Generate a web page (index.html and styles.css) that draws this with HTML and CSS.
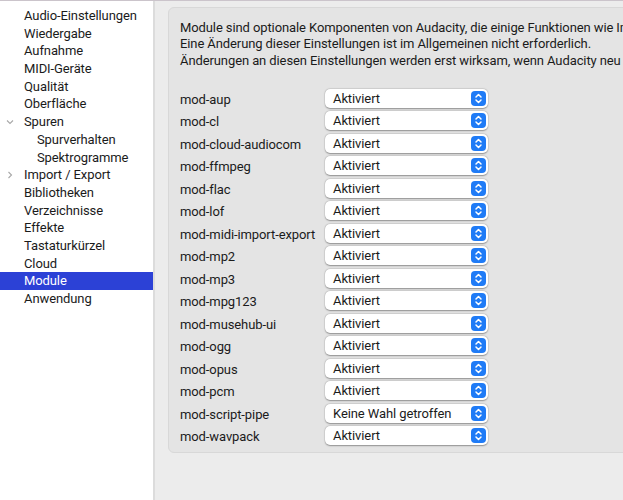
FILE: index.html
```html
<!DOCTYPE html>
<html lang="de">
<head>
  <meta charset="UTF-8">
  <meta name="viewport" content="width=device-width, initial-scale=1.0">
  <title>Einstellungen: Module</title>
  <link rel="stylesheet" href="styles.css">
</head>
<body>
  <aside class="sidebar">
    <ul class="nav">
      <li>Audio-Einstellungen</li>
      <li>Wiedergabe</li>
      <li>Aufnahme</li>
      <li>MIDI-Geräte</li>
      <li>Qualität</li>
      <li>Oberfläche</li>
      <li class="group open">
        <svg class="twisty" width="8" height="8" viewBox="0 0 8 8"><polyline points="1,2.5 4,5.5 7,2.5"/></svg>
        Spuren
      </li>
      <li class="sub">Spurverhalten</li>
      <li class="sub">Spektrogramme</li>
      <li class="group">
        <svg class="twisty" width="8" height="8" viewBox="0 0 8 8"><polyline points="2.5,1 5.5,4 2.5,7"/></svg>
        Import / Export
      </li>
      <li>Bibliotheken</li>
      <li>Verzeichnisse</li>
      <li>Effekte</li>
      <li>Tastaturkürzel</li>
      <li>Cloud</li>
      <li class="selected">Module</li>
      <li>Anwendung</li>
    </ul>
  </aside>

  <main class="content">
    <section class="group-box">
      <p class="intro">Module sind optionale Komponenten von Audacity, die einige Funktionen wie Import/Export ermöglichen.<br>Eine Änderung dieser Einstellungen ist im Allgemeinen nicht erforderlich.</p>
      <p class="intro">Änderungen an diesen Einstellungen werden erst wirksam, wenn Audacity neu gestartet wird.</p>

      <div class="module-list">
        <label>mod-aup</label>
        <div class="popup"><span>Aktiviert</span><svg class="stepper" width="15" height="15" viewBox="0 0 15 15"><rect width="15" height="15" rx="4"/><polyline points="5,6 7.5,3.5 10,6"/><polyline points="5,9 7.5,11.5 10,9"/></svg></div>
        <label>mod-cl</label>
        <div class="popup"><span>Aktiviert</span><svg class="stepper" width="15" height="15" viewBox="0 0 15 15"><rect width="15" height="15" rx="4"/><polyline points="5,6 7.5,3.5 10,6"/><polyline points="5,9 7.5,11.5 10,9"/></svg></div>
        <label>mod-cloud-audiocom</label>
        <div class="popup"><span>Aktiviert</span><svg class="stepper" width="15" height="15" viewBox="0 0 15 15"><rect width="15" height="15" rx="4"/><polyline points="5,6 7.5,3.5 10,6"/><polyline points="5,9 7.5,11.5 10,9"/></svg></div>
        <label>mod-ffmpeg</label>
        <div class="popup"><span>Aktiviert</span><svg class="stepper" width="15" height="15" viewBox="0 0 15 15"><rect width="15" height="15" rx="4"/><polyline points="5,6 7.5,3.5 10,6"/><polyline points="5,9 7.5,11.5 10,9"/></svg></div>
        <label>mod-flac</label>
        <div class="popup"><span>Aktiviert</span><svg class="stepper" width="15" height="15" viewBox="0 0 15 15"><rect width="15" height="15" rx="4"/><polyline points="5,6 7.5,3.5 10,6"/><polyline points="5,9 7.5,11.5 10,9"/></svg></div>
        <label>mod-lof</label>
        <div class="popup"><span>Aktiviert</span><svg class="stepper" width="15" height="15" viewBox="0 0 15 15"><rect width="15" height="15" rx="4"/><polyline points="5,6 7.5,3.5 10,6"/><polyline points="5,9 7.5,11.5 10,9"/></svg></div>
        <label>mod-midi-import-export</label>
        <div class="popup"><span>Aktiviert</span><svg class="stepper" width="15" height="15" viewBox="0 0 15 15"><rect width="15" height="15" rx="4"/><polyline points="5,6 7.5,3.5 10,6"/><polyline points="5,9 7.5,11.5 10,9"/></svg></div>
        <label>mod-mp2</label>
        <div class="popup"><span>Aktiviert</span><svg class="stepper" width="15" height="15" viewBox="0 0 15 15"><rect width="15" height="15" rx="4"/><polyline points="5,6 7.5,3.5 10,6"/><polyline points="5,9 7.5,11.5 10,9"/></svg></div>
        <label>mod-mp3</label>
        <div class="popup"><span>Aktiviert</span><svg class="stepper" width="15" height="15" viewBox="0 0 15 15"><rect width="15" height="15" rx="4"/><polyline points="5,6 7.5,3.5 10,6"/><polyline points="5,9 7.5,11.5 10,9"/></svg></div>
        <label>mod-mpg123</label>
        <div class="popup"><span>Aktiviert</span><svg class="stepper" width="15" height="15" viewBox="0 0 15 15"><rect width="15" height="15" rx="4"/><polyline points="5,6 7.5,3.5 10,6"/><polyline points="5,9 7.5,11.5 10,9"/></svg></div>
        <label>mod-musehub-ui</label>
        <div class="popup"><span>Aktiviert</span><svg class="stepper" width="15" height="15" viewBox="0 0 15 15"><rect width="15" height="15" rx="4"/><polyline points="5,6 7.5,3.5 10,6"/><polyline points="5,9 7.5,11.5 10,9"/></svg></div>
        <label>mod-ogg</label>
        <div class="popup"><span>Aktiviert</span><svg class="stepper" width="15" height="15" viewBox="0 0 15 15"><rect width="15" height="15" rx="4"/><polyline points="5,6 7.5,3.5 10,6"/><polyline points="5,9 7.5,11.5 10,9"/></svg></div>
        <label>mod-opus</label>
        <div class="popup"><span>Aktiviert</span><svg class="stepper" width="15" height="15" viewBox="0 0 15 15"><rect width="15" height="15" rx="4"/><polyline points="5,6 7.5,3.5 10,6"/><polyline points="5,9 7.5,11.5 10,9"/></svg></div>
        <label>mod-pcm</label>
        <div class="popup"><span>Aktiviert</span><svg class="stepper" width="15" height="15" viewBox="0 0 15 15"><rect width="15" height="15" rx="4"/><polyline points="5,6 7.5,3.5 10,6"/><polyline points="5,9 7.5,11.5 10,9"/></svg></div>
        <label>mod-script-pipe</label>
        <div class="popup"><span>Keine Wahl getroffen</span><svg class="stepper" width="15" height="15" viewBox="0 0 15 15"><rect width="15" height="15" rx="4"/><polyline points="5,6 7.5,3.5 10,6"/><polyline points="5,9 7.5,11.5 10,9"/></svg></div>
        <label>mod-wavpack</label>
        <div class="popup"><span>Aktiviert</span><svg class="stepper" width="15" height="15" viewBox="0 0 15 15"><rect width="15" height="15" rx="4"/><polyline points="5,6 7.5,3.5 10,6"/><polyline points="5,9 7.5,11.5 10,9"/></svg></div>
      </div>
    </section>
  </main>
</body>
</html>
```

FILE: styles.css
```css
html, body {
  height: 100%;
}

body {
  margin: 0;
  display: flex;
  overflow: hidden;
  font-family: Roboto, "Noto Sans", sans-serif;
  font-size: 13px;
  letter-spacing: -0.1px;
  color: #1b1b1b;
  border-top: 1px solid #cbc4cb;
  box-sizing: border-box;
}

/* left navigation tree */
.sidebar {
  width: 153px;
  flex-shrink: 0;
  background-color: #fff;
  border-right: 2px solid #dcdcdc;
}

.nav {
  list-style: none;
  margin: 0;
  padding: 6px 0 0;
}

.nav li {
  position: relative;
  height: 17.7px;
  line-height: 17.7px;
  padding-left: 24px;
  white-space: nowrap;
}

.nav li.sub {
  padding-left: 37px;
}

.nav li.selected {
  background-color: #2c41d6;
  color: #fff;
}

.twisty {
  position: absolute;
  left: 6px;
  top: 5px;
  fill: none;
  stroke: #a8a8a8;
  stroke-width: 1.1;
}

/* preferences page */
.content {
  flex: 1;
  background-color: #ececec;
  padding: 6px 0 0 13px;
  overflow: hidden;
}

.group-box {
  width: 560px;
  background-color: #e4e4e4;
  border: 1px solid #d8d8d8;
  border-radius: 6px;
  padding: 12px 0 5px 11px;
}

.intro {
  margin: 0;
  line-height: 16px;
  white-space: nowrap;
}

.intro + .intro {
  margin-top: 1px;
}

.module-list {
  display: grid;
  grid-template-columns: 145px 163px;
  grid-auto-rows: 22.5px;
  align-items: center;
  margin-top: 18px;
}

.module-list label {
  padding-top: 2px;
  white-space: nowrap;
}

.popup {
  height: 19px;
  display: flex;
  align-items: center;
  justify-content: space-between;
  background-color: #fff;
  border-radius: 5px;
  box-shadow: 0 0.5px 1.5px rgba(0, 0, 0, 0.35), 0 0 0 0.5px rgba(0, 0, 0, 0.06);
  padding: 0 2px 0 8px;
}

.stepper rect {
  fill: #1f7bf6;
}

.stepper polyline {
  fill: none;
  stroke: #fff;
  stroke-width: 1.5;
  stroke-linecap: round;
  stroke-linejoin: round;
}
```
